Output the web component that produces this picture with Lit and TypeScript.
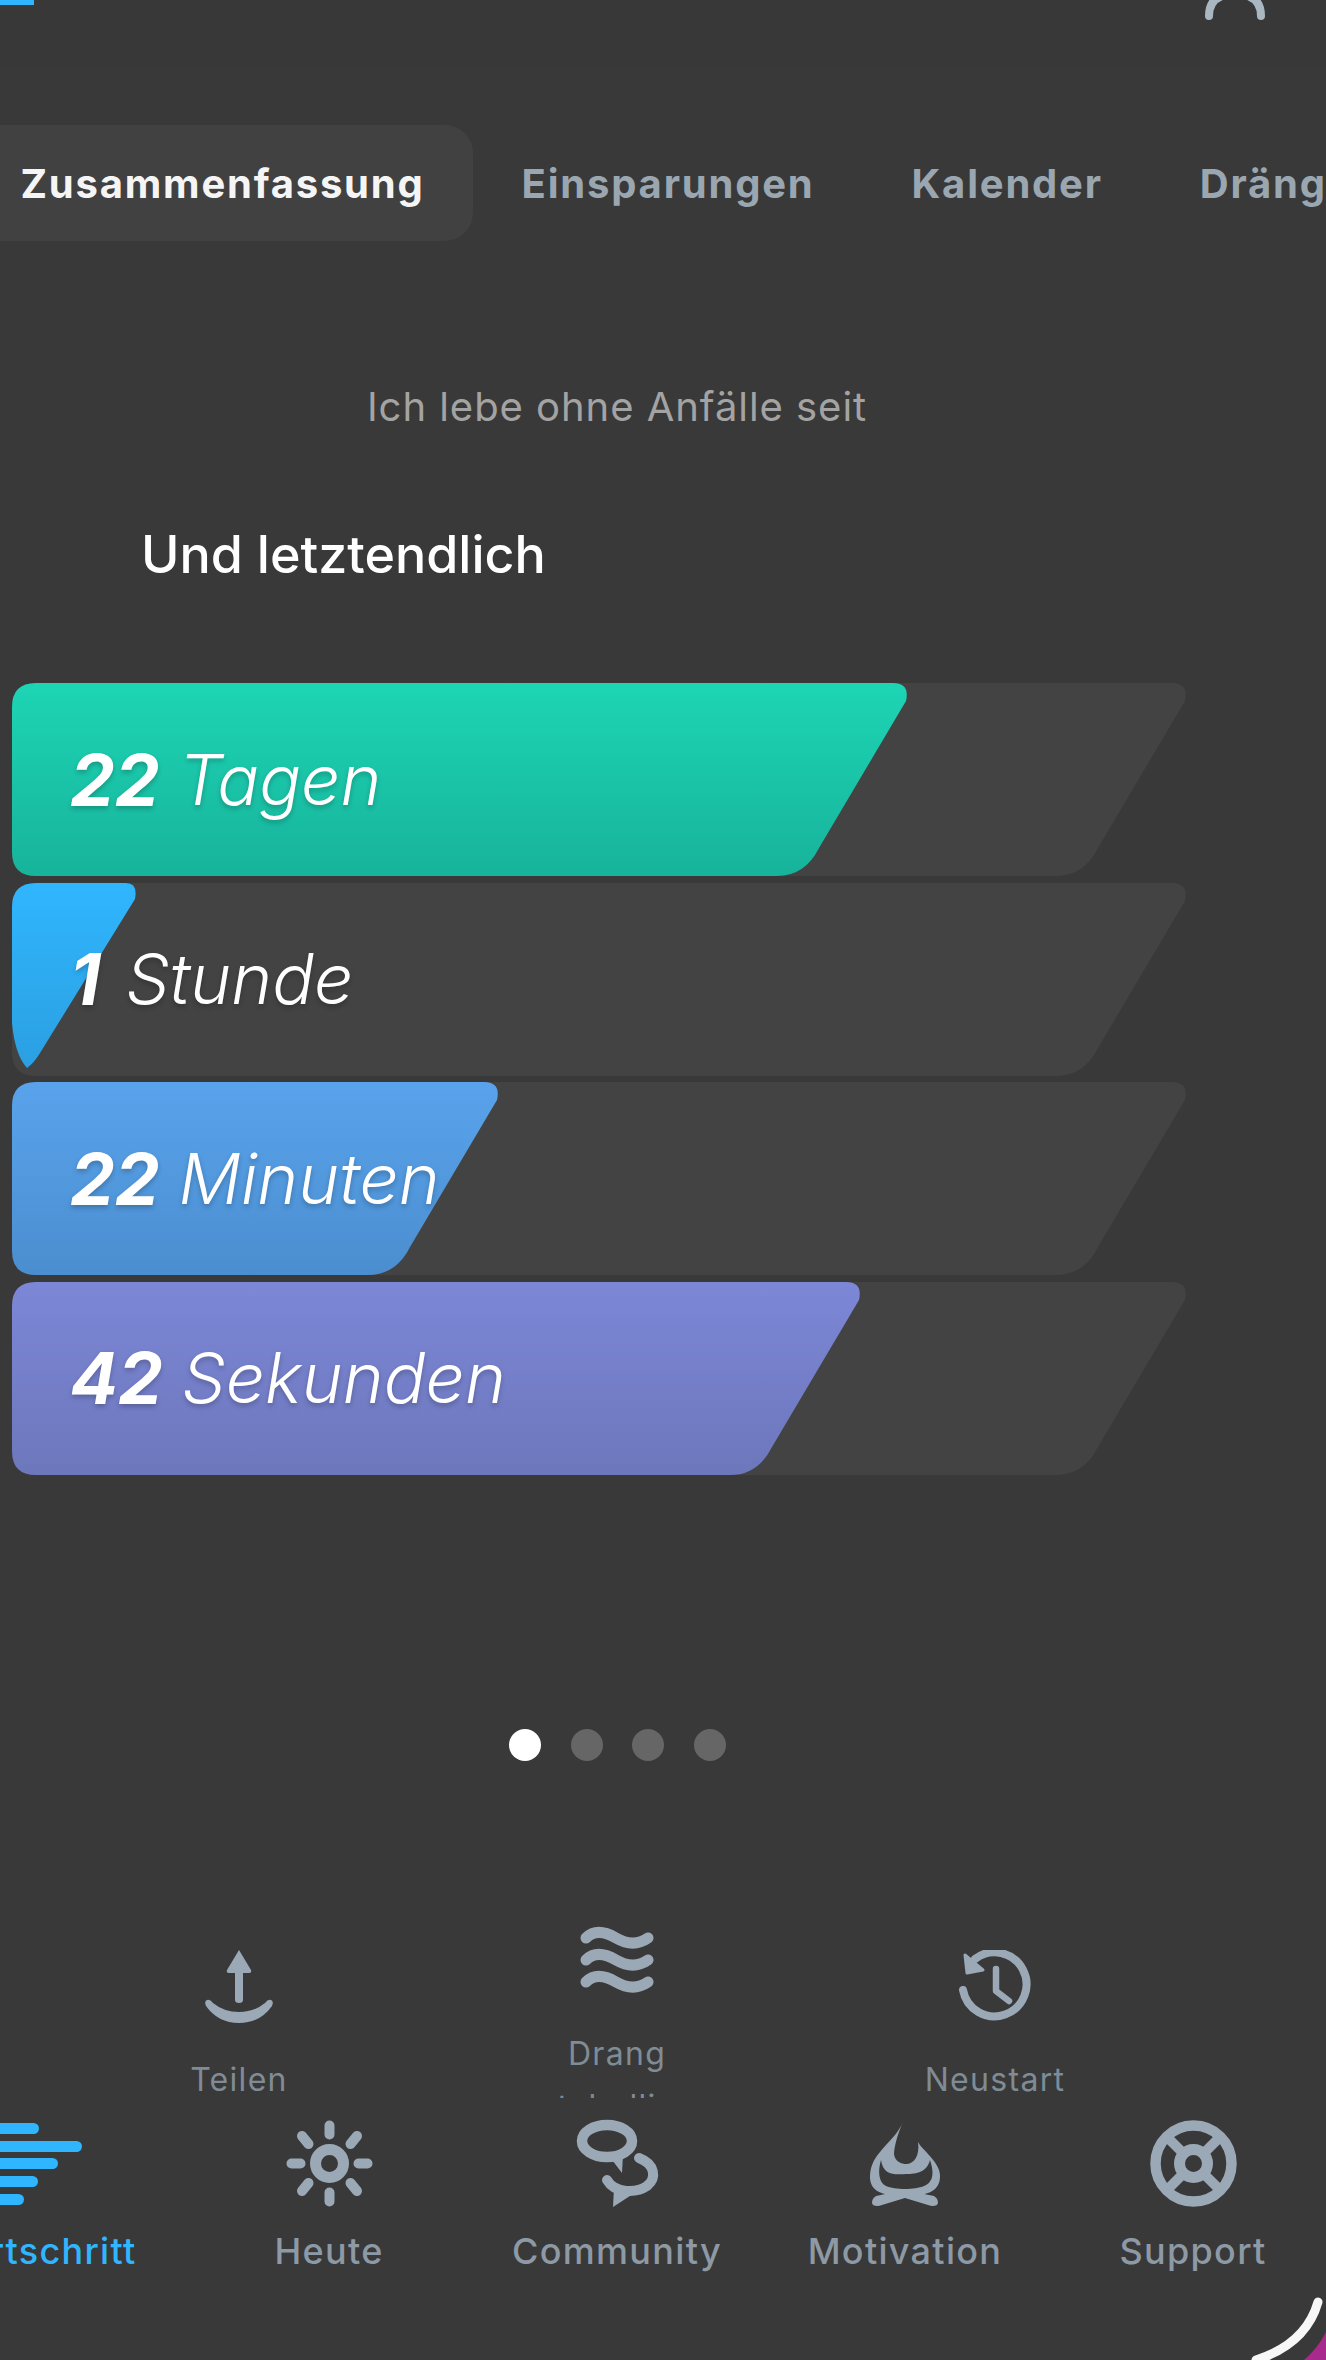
import { LitElement, html, css, svg } from "lit";
import { customElement } from "lit/decorators.js";

const H = 193;

// Slanted bar outline: w is the x of the top-right corner inside a 1174px wide row.
function barPath(w: number): string {
  if (w < 150) {
    return `M0 24 Q0 0 24 0 H${w - 10} Q${w + 2} 0 ${w - 1} 16 L${28} 170 Q22 180 15 185 Q3 172 0 140 Z`;
  }
  return `M0 24 Q0 0 24 0 H${w - 14} Q${w + 3} 0 ${w - 1} 18 L${w - 88} 165 Q${w - 102} ${H} ${w - 130} ${H} H24 Q0 ${H} 0 ${H - 24} Z`;
}

const bars = [
  { n: "22", unit: "Tagen", w: 895, gap: 19, a: "#1dd5b4", b: "#17b39b" },
  { n: "1", unit: "Stunde", w: 124, gap: 25, a: "#30b6fe", b: "#2b9fe2" },
  { n: "22", unit: "Minuten", w: 486, gap: 19, a: "#59a3ec", b: "#4b8ecf" },
  { n: "42", unit: "Sekunden", w: 848, gap: 19, a: "#7c87d7", b: "#6d77bb" },
];

const shareIcon = svg`<svg class="ai" width="70" height="73" viewBox="0 0 70 73" fill="#9aa9b5">
  <path d="M35 0 L47 20 Q48 23 45 23 H39 V50 Q39 53 35 53 Q31 53 31 50 V23 H25 Q22 23 23 20 Z"/>
  <path d="M3 50 Q6 49 9 53 Q20 62 35 62 Q50 62 61 53 Q64 49 67 50 Q70 51 68 56 Q56 73 35 73 Q14 73 2 56 Q0 51 3 50 Z"/>
</svg>`;

const wavesIcon = svg`<svg class="ai" width="74" height="73" viewBox="0 0 74 73" fill="none" stroke="#9aa9b5" stroke-width="11" stroke-linecap="round">
  <path d="M6 14 C14 6 24 7 36 14 C48 21 58 21 68 14"/>
  <path d="M6 36 C14 28 24 29 36 36 C48 43 58 43 68 36"/>
  <path d="M6 58 C14 50 24 51 36 58 C48 65 58 65 68 58"/>
</svg>`;

const historyIcon = svg`<svg class="ai" width="73" height="73" viewBox="0 0 73 73" fill="none" stroke="#9aa9b5">
  <path d="M16 9 A32 32 0 1 1 4 40" stroke-width="8" stroke-linecap="round"/>
  <path d="M6 5 L8 23 L24 20 Z" fill="#9aa9b5" stroke="#9aa9b5" stroke-width="3" stroke-linejoin="round"/>
  <path d="M37 19 V41 L50 51" stroke-width="6.5" stroke-linecap="round" stroke-linejoin="round"/>
</svg>`;

const progressIcon = svg`<svg class="ni" width="87" height="87" viewBox="0 0 87 87" fill="#30b6fe">
  <rect x="-4" y="3" width="45" height="11" rx="5.5"/>
  <rect x="-4" y="21" width="88" height="11" rx="5.5"/>
  <rect x="-4" y="38" width="64" height="11" rx="5.5"/>
  <rect x="-4" y="56" width="44" height="11" rx="5.5"/>
  <rect x="-4" y="74" width="30" height="11" rx="5.5"/>
</svg>`;

const sunIcon = svg`<svg class="ni" width="87" height="87" viewBox="0 0 87 87" fill="none" stroke="#9aa9b5">
  <circle cx="43.5" cy="43.5" r="14" stroke-width="11"/>
  <g stroke-width="10" stroke-linecap="round">
    <path d="M43.5 5.5 V14.5 M43.5 72.5 V81.5 M5.5 43.5 H14.5 M72.5 43.5 H81.5"/>
    <path d="M16 16 L22.5 24 M71 16 L64.5 24 M16 71 L22.5 63 M71 71 L64.5 63"/>
  </g>
</svg>`;

const communityIcon = svg`<svg class="ni" width="80" height="87" viewBox="0 0 80 87" fill="none" stroke="#9aa9b5">
  <ellipse cx="30" cy="21" rx="25" ry="16" stroke-width="10.5"/>
  <path d="M32 36 L45 53 L46 34 Z" fill="#9aa9b5" stroke="none"/>
  <path d="M62 38 C78 44 80 58 70 66 C60 73 38 74 30 60" stroke-width="10" stroke-linecap="round"/>
  <path d="M36 87 L37 68 L56 74 Z" fill="#9aa9b5" stroke="none"/>
</svg>`;

const flameIcon = svg`<svg class="ni" width="70" height="87" viewBox="0 0 70 87" fill="#9aa9b5">
  <path fill-rule="evenodd" d="M33 2 C28 14 18 22 10 32 C3 40 0 48 0 57 C0 70 10 76 35 76 C60 76 70 70 70 56 C70 42 52 30 48 22 C50 36 44 44 36 44 C32 44 25 42 24 34 C24 28 27 15 33 2 Z
    M11 40 C13 55 24 55 36 54 C47 54 57 52 60 40 C64 52 64 62 54 66 C45 70 25 70 16 66 C8 62 8 50 11 40 Z"/>
  <path d="M6 76 L34 70 L64 76 Q70 80 67 85 Q63 87 58 85 L35 78 L12 85 Q7 87 3 85 Q0 80 6 76 Z"/>
</svg>`;

const supportIcon = svg`<svg class="ni" width="87" height="87" viewBox="0 0 87 87" fill="none" stroke="#9aa9b5">
  <circle cx="43.5" cy="43.5" r="38" stroke-width="10.5"/>
  <circle cx="43.5" cy="43.5" r="14" stroke-width="11"/>
  <path d="M16 16 L33 33 M71 16 L54 33 M16 71 L33 54 M71 71 L54 54" stroke-width="10"/>
</svg>`;

const actions = [
  { icon: shareIcon, lines: ["Teilen"] },
  { icon: wavesIcon, lines: ["Drang", "tabellie"] },
  { icon: historyIcon, lines: ["Neustart"] },
];

const navItems = [
  { icon: progressIcon, label: "Fortschritt", active: true },
  { icon: sunIcon, label: "Heute", active: false },
  { icon: communityIcon, label: "Community", active: false },
  { icon: flameIcon, label: "Motivation", active: false },
  { icon: supportIcon, label: "Support", active: false },
];

@customElement("app-root")
export class AppRoot extends LitElement {
  static styles = css`
    :host {
      display: block;
      width: 1326px;
      height: 2360px;
      overflow: hidden;
      position: relative;
      background: #393939;
      font-family: Inter, "Liberation Sans", sans-serif;
    }
    .header {
      height: 66px;
      background: #383838;
      display: flex;
      justify-content: space-between;
      align-items: flex-start;
    }
    .logo-stub { width: 34px; height: 5px; background: #30b6fe; }
    .profile { margin-right: 59px; display: block; }
    .tabs {
      display: flex;
      margin: 59px 0 0 -28px;
      width: 1400px;
    }
    .tab {
      height: 116px;
      padding: 0 48.5px;
      display: flex;
      align-items: center;
      font-size: 40px;
      font-weight: 700;
      letter-spacing: 1.8px;
      color: #9aa6b0;
      white-space: nowrap;
      border-radius: 28px;
    }
    .tab.on { background: #414141; color: #f5f5f5; }
    .subtitle {
      margin: 136px 0 0;
      height: 60px;
      line-height: 60px;
      width: 1234px;
      text-align: center;
      font-size: 40px;
      letter-spacing: 0.95px;
      color: #a3a3a3;
    }
    .heading {
      margin: 88px 0 0 141px;
      height: 60px;
      line-height: 60px;
      font-size: 52px;
      font-weight: 500;
      color: #fff;
    }
    .bars {
      margin: 98px 0 0 12px;
      display: flex;
      flex-direction: column;
      gap: 6.5px;
    }
    .bar {
      position: relative;
      width: 1174px;
      height: 193px;
    }
    .bar svg { position: absolute; inset: 0; overflow: visible; }
    .bar-text {
      position: relative;
      height: 193px;
      padding-left: 58px;
      display: flex;
      align-items: center;
      color: #fff;
      font-style: italic;
      font-size: 69.5px;
      white-space: nowrap;
      text-shadow: 0 3px 5px rgba(0, 0, 0, 0.22);
    }
    .bar-text b { font-weight: 700; font-size: 71px; }
    .bar-text span { font-weight: 300; }
    .dots {
      margin: 254px 0 0 509px;
      display: flex;
      gap: 29.5px;
    }
    .dot { width: 32px; height: 32px; border-radius: 50%; background: #666; }
    .dot.on { background: #fff; }
    .actions {
      margin: 163px 0 0 50px;
      width: 1134px;
      display: grid;
      grid-template-columns: repeat(3, 1fr);
      align-items: center;
    }
    .action {
      display: flex;
      flex-direction: column;
      align-items: center;
      font-size: 32px;
      line-height: 53px;
      letter-spacing: 1.3px;
      color: #7f8c96;
    }
    .action-icon {
      height: 73px;
      margin-bottom: 30px;
      display: flex;
      align-items: center;
    }
    .nav {
      position: relative;
      margin: -35px 0 0 -103px;
      width: 1440px;
      height: 262px;
      padding-top: 22px;
      box-sizing: border-box;
      background: #393939;
      display: grid;
      grid-template-columns: repeat(5, 1fr);
      align-content: start;
    }
    .nav-item {
      display: flex;
      flex-direction: column;
      align-items: center;
      font-size: 36px;
      font-weight: 500;
      line-height: 44px;
      letter-spacing: 1.3px;
      color: #8d9aa5;
    }
    .nav-item.on { color: #30b6fe; }
    .nav-icon { height: 87px; margin-bottom: 22px; display: flex; }
    .nav-icon svg { overflow: visible; }
    .corner { position: absolute; right: 0; bottom: 0; display: block; }
  `;

  render() {
    return html`
      <div class="header">
        <div class="logo-stub"></div>
        <svg class="profile" width="64" height="24" viewBox="0 0 64 24" fill="none" stroke="#a9b7c2" stroke-width="8" stroke-linecap="round">
          <path d="M6 16 Q6 -6 32 -6 Q58 -6 58 16" />
        </svg>
      </div>
      <div class="tabs">
        <div class="tab on">Zusammenfassung</div>
        <div class="tab">Einsparungen</div>
        <div class="tab">Kalender</div>
        <div class="tab">Drängen</div>
      </div>
      <div class="subtitle">Ich lebe ohne Anfälle seit</div>
      <div class="heading">Und letztendlich</div>
      <div class="bars">
        ${bars.map(
          (b, i) => html`
            <div class="bar">
              <svg width="1174" height="193" viewBox="0 0 1174 193">
                <defs>
                  <linearGradient id="g${i}" x1="0" y1="0" x2="0" y2="1">
                    <stop offset="0" stop-color=${b.a}></stop>
                    <stop offset="1" stop-color=${b.b}></stop>
                  </linearGradient>
                </defs>
                <path d=${barPath(1174)} fill="#434343"></path>
                <path d=${barPath(b.w)} fill="url(#g${i})"></path>
              </svg>
              <div class="bar-text" style="gap:${b.gap}px"><b>${b.n}</b><span>${b.unit}</span></div>
            </div>
          `
        )}
      </div>
      <div class="dots">
        <div class="dot on"></div>
        <div class="dot"></div>
        <div class="dot"></div>
        <div class="dot"></div>
      </div>
      <div class="actions">
        ${actions.map(
          (a) => html`
            <div class="action">
              <div class="action-icon">${a.icon}</div>
              ${a.lines.map((l) => html`<div>${l}</div>`)}
            </div>
          `
        )}
      </div>
      <div class="nav">
        ${navItems.map(
          (n) => html`
            <div class="nav-item ${n.active ? "on" : ""}">
              <div class="nav-icon">${n.icon}</div>
              <div>${n.label}</div>
            </div>
          `
        )}
      </div>
      <svg class="corner" width="100" height="80" viewBox="0 0 100 80" fill="none">
        <path d="M100 52 L100 80 L78 80 Q92 68 100 52 Z" fill="#a82a8c"></path>
        <path d="M92 22 Q80 64 30 80" stroke="#f7f7f7" stroke-width="9" stroke-linecap="round"></path>
      </svg>
    `;
  }
}
